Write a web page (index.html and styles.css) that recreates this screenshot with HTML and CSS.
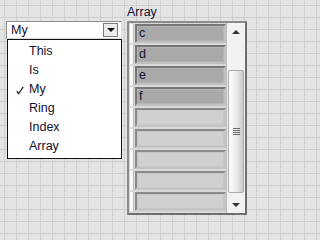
FILE: index.html
```html
<!DOCTYPE html>
<html>
<head>
<meta charset="utf-8">
<link rel="stylesheet" href="styles.css">
</head>
<body>
<div class="panel">
  <div class="ring-col">
    <div class="ring">
      <span class="ring-text">My</span>
      <span class="ring-btn"><span class="tri-down"></span></span>
    </div>
    <ul class="menu">
      <li class="item">This</li>
      <li class="item">Is</li>
      <li class="item checked"><svg class="check" width="8" height="9" viewBox="0 0 8 9"><path d="M0.8 5.2 L2.6 7.8 L7.2 0.8" fill="none" stroke="#111" stroke-width="1.2"/></svg>My</li>
      <li class="item">Ring</li>
      <li class="item">Index</li>
      <li class="item">Array</li>
    </ul>
  </div>
  <div class="array-col">
    <div class="label">Array</div>
    <div class="array">
      <div class="elements">
        <div class="el"><span class="strip"></span><span class="field filled">c</span></div>
        <div class="el"><span class="strip"></span><span class="field filled">d</span></div>
        <div class="el"><span class="strip"></span><span class="field filled">e</span></div>
        <div class="el"><span class="strip"></span><span class="field filled">f</span></div>
        <div class="el"><span class="strip"></span><span class="field"></span></div>
        <div class="el"><span class="strip"></span><span class="field"></span></div>
        <div class="el"><span class="strip"></span><span class="field"></span></div>
        <div class="el"><span class="strip"></span><span class="field"></span></div>
        <div class="el"><span class="strip"></span><span class="field"></span></div>
      </div>
      <div class="scroll">
        <div class="sbtn"><span class="tri-up-s"></span></div>
        <div class="track">
          <div class="thumb"><span class="grip"></span><span class="grip"></span><span class="grip"></span><span class="grip"></span></div>
        </div>
        <div class="sbtn"><span class="tri-down-s"></span></div>
      </div>
    </div>
  </div>
</div>
</body>
</html>
```
FILE: styles.css
```css
html, body {
  margin: 0;
  padding: 0;
}
body {
  width: 254px;
  height: 221px;
  overflow: hidden;
  background-color: #e4e4e4;
  background-image:
    linear-gradient(to right, #cfcfcf 1px, transparent 1px),
    linear-gradient(to bottom, #cfcfcf 1px, transparent 1px);
  background-size: 12px 12px;
  background-position: 4px 5px;
  font-family: "Liberation Sans", Arial, sans-serif;
  font-size: 12px;
  color: #101030;
}
.panel {
  display: flex;
  align-items: flex-start;
  padding-left: 6px;
}
.ring-col {
  position: relative;
  margin-top: 21px;
}
.ring {
  box-sizing: border-box;
  width: 116px;
  height: 18px;
  background: #fff;
  border: 1px solid #8e8e8e;
  border-right-color: #d8d8d8;
  border-bottom-color: #d8d8d8;
  display: flex;
  align-items: center;
  justify-content: space-between;
  padding: 0 3px 0 4px;
  font-size: 12.5px;
}
.ring-text {
  line-height: 16px;
}
.ring-btn {
  box-sizing: border-box;
  width: 15px;
  height: 14px;
  background: #ececec;
  border: 1px solid #7a7a7a;
  display: flex;
  align-items: center;
  justify-content: center;
}
.tri-down {
  width: 0;
  height: 0;
  border-left: 4px solid transparent;
  border-right: 4px solid transparent;
  border-top: 4px solid #111;
}
.menu {
  position: absolute;
  left: 1px;
  top: 18px;
  box-sizing: border-box;
  width: 115px;
  margin: 0;
  padding: 2px 0 2px 0;
  list-style: none;
  background: #fff;
  border: 1px solid #111;
  font-size: 12.5px;
}
.item {
  position: relative;
  height: 19px;
  line-height: 19px;
  padding-left: 21px;
}
.check {
  position: absolute;
  left: 8px;
  top: 6px;
}
.array-col {
  margin-left: 5px;
  display: flex;
  flex-direction: column;
}
.label {
  height: 17px;
  line-height: 17px;
  padding-top: 4px;
  font-size: 12.5px;
}
.array {
  box-sizing: border-box;
  width: 120px;
  height: 194px;
  border: 2px solid #6e6e6e;
  border-top-color: #8a8a8a;
  border-left-color: #8a8a8a;
  background: #d9d9d9;
  display: flex;
}
.elements {
  flex: 1;
  display: flex;
  flex-direction: column;
  padding: 1px 0 0 1px;
}
.el {
  display: flex;
  height: 19px;
  margin-bottom: 2px;
}
.strip {
  box-sizing: border-box;
  width: 4px;
  background: #f7f7f7;
  border-right: 1px solid #bdbdbd;
}
.field {
  box-sizing: border-box;
  flex: 1;
  margin-left: 1px;
  border: 2px solid #c4c4c4;
  border-top-color: #8a8a8a;
  border-left-color: #8a8a8a;
  background: #d0d0d0;
  padding-left: 2px;
  line-height: 15px;
  font-size: 12.5px;
  box-shadow: inset 0 0 0 1px #c8c8c8;
}
.field.filled {
  background: #a9a9a9;
  box-shadow: inset 0 0 0 1px #b4b4b4;
  border-color: #c0c0c0;
  border-top-color: #777;
  border-left-color: #777;
}
.scroll {
  width: 18px;
  display: flex;
  flex-direction: column;
  background: #f2f2f2;
  border-left: 1px solid #bcbcbc;
}
.sbtn {
  height: 17px;
  display: flex;
  align-items: center;
  justify-content: center;
}
.tri-up-s {
  width: 0;
  height: 0;
  border-left: 4px solid transparent;
  border-right: 4px solid transparent;
  border-bottom: 4px solid #333;
}
.tri-down-s {
  width: 0;
  height: 0;
  border-left: 4px solid transparent;
  border-right: 4px solid transparent;
  border-top: 4px solid #333;
}
.track {
  flex: 1;
  display: flex;
  flex-direction: column;
  justify-content: flex-end;
  padding: 0 1px 3px 1px;
}
.thumb {
  box-sizing: border-box;
  height: 123px;
  border: 1px solid #a9a9a9;
  border-radius: 2px;
  background: linear-gradient(to right, #fdfdfd 0%, #ececec 50%, #c9c9c9 100%);
  display: flex;
  flex-direction: column;
  align-items: center;
  justify-content: center;
  gap: 1px;
}
.grip {
  width: 7px;
  height: 1px;
  background: #6a6a6a;
}
```
